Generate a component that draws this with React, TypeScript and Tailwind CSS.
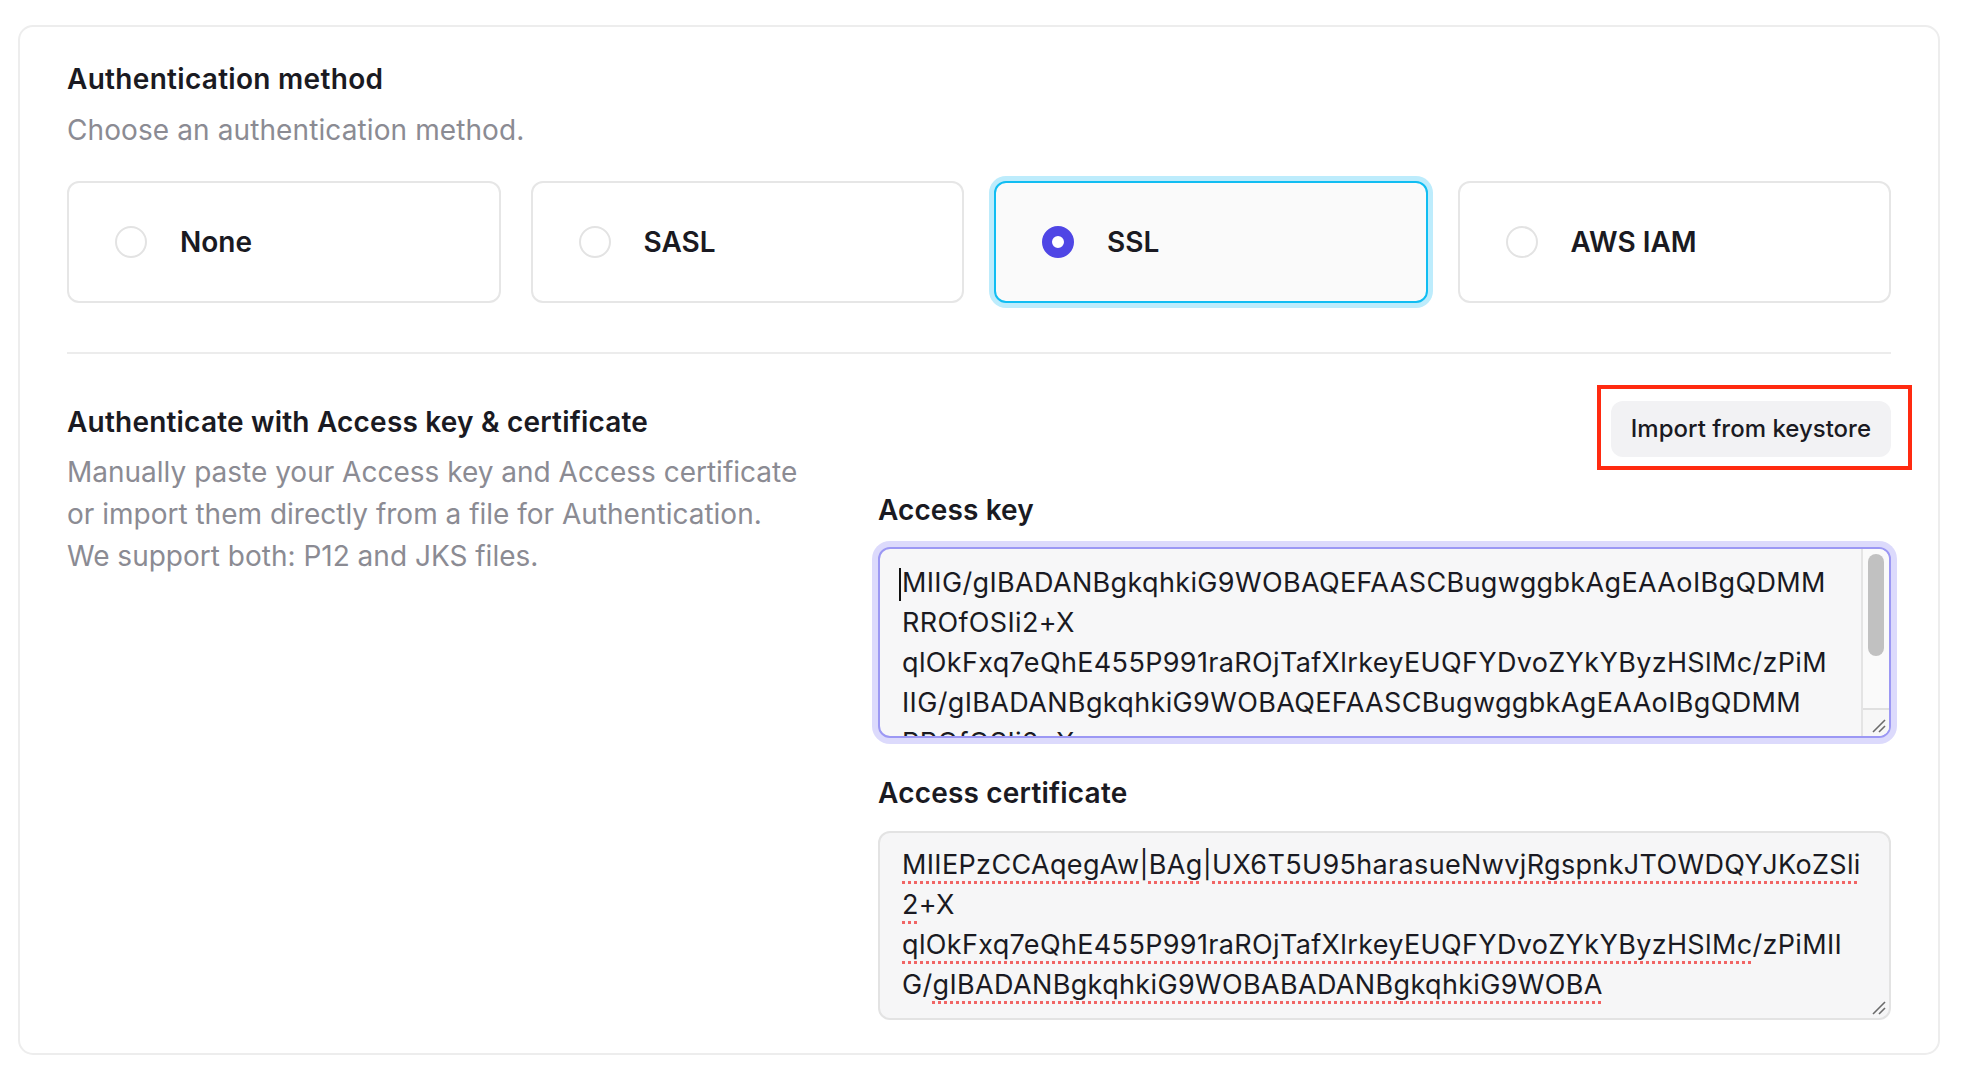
import React from "react";

function Grip() {
  return (
    <svg width="16" height="16" viewBox="0 0 16 16" className="absolute right-[3px] bottom-[3px]">
      <line x1="15" y1="3" x2="3" y2="15" stroke="#6b6b6b" strokeWidth="1.6" />
      <line x1="15" y1="9" x2="9" y2="15" stroke="#6b6b6b" strokeWidth="1.6" />
    </svg>
  );
}

const cards = [
  { label: "None", selected: false },
  { label: "SASL", selected: false },
  { label: "SSL", selected: true },
  { label: "AWS IAM", selected: false },
];

const sp = "underline decoration-dotted decoration-[#f16565] decoration-[3px] underline-offset-[7px]";

export default function App() {
  return (
    <div className="min-h-screen bg-white font-['Inter',sans-serif] text-[#1a1a22] pt-[25px] pl-[18px]">
      <div className="w-[1922px] h-[1030px] rounded-[15px] border-2 border-[#ededed] px-[47px] pt-[34px]">
        <h2 className="text-[28px] leading-[36px] font-semibold tracking-[0.3px]">Authentication method</h2>
        <p className="mt-[15px] text-[28px] leading-[36px] text-[#8b8b93] tracking-[0.1px]">Choose an authentication method.</p>

        <div className="mt-[33px] flex gap-[30px]">
          {cards.map((c) => (
            <div
              key={c.label}
              className={
                c.selected
                  ? "flex-1 h-[122px] rounded-[12px] border-2 border-[#10bdf2] ring-[5px] ring-[#bdecfc] bg-[#fafafa] flex items-center pl-[46px] gap-[33px]"
                  : "flex-1 h-[122px] rounded-[12px] border-2 border-[#e6e6e6] bg-white flex items-center pl-[46px] gap-[33px]"
              }
            >
              {c.selected ? (
                <span className="w-[32px] h-[32px] rounded-full border-[10px] border-[#4f46e5] bg-white" />
              ) : (
                <span className="w-[32px] h-[32px] rounded-full border-2 border-[#e3e3e3] bg-white" />
              )}
              <span className="text-[28px] leading-[36px] font-semibold">{c.label}</span>
            </div>
          ))}
        </div>

        <div className="mt-[49px] h-[2px] bg-[#ececec]" />

        <div className="mt-[47px] flex">
          <div className="w-[811px] pt-[3px]">
            <h3 className="text-[28px] leading-[36px] font-semibold tracking-[0.2px]">Authenticate with Access key &amp; certificate</h3>
            <p className="mt-[11px] text-[28px] leading-[42px] text-[#8b8b93]">
              Manually paste your Access key and Access certificate
              <br />
              or import them directly from a file for Authentication.
              <br />
              We support both: P12 and JKS files.
            </p>
          </div>

          <div className="flex-1">
            <div className="flex justify-end">
              <button className="relative h-[56px] px-[20px] rounded-[12px] bg-[#f2f2f4] text-[24px] font-medium text-[#1a1a22]">
                Import from keystore
                <span className="absolute -left-[14px] -top-[16px] -right-[21px] -bottom-[13px] border-4 border-[#ff2a10] pointer-events-none" />
              </button>
            </div>

            <div className="mt-[35px] text-[28px] leading-[36px] font-semibold tracking-[0.1px]">Access key</div>
            <div className="mt-[19px] relative h-[191px] rounded-[12px] border-2 border-[#9c98f4] ring-[6px] ring-[#dcdafc] bg-[#f7f7f8] overflow-hidden">
              <div className="pl-[22px] pr-[60px] pt-[14px] text-[27px] leading-[40px] tracking-[0.35px] whitespace-nowrap">
                <div>
                  <span className="inline-block w-[2px] h-[33px] bg-[#111] align-middle -ml-[3px] mr-[1px]" />
                  MIIG/gIBADANBgkqhkiG9WOBAQEFAASCBugwggbkAgEAAoIBgQDMM
                </div>
                <div>RROfOSIi2+X</div>
                <div>qlOkFxq7eQhE455P991raROjTafXlrkeyEUQFYDvoZYkYByzHSlMc/zPiM</div>
                <div>IIG/gIBADANBgkqhkiG9WOBAQEFAASCBugwggbkAgEAAoIBgQDMM</div>
                <div>RROfOSIi2+X</div>
              </div>
              <div className="absolute top-0 right-0 bottom-0 w-[28px] bg-[#fafafa] border-l-2 border-[#e4e4e4] flex flex-col">
                <div className="flex-1 relative">
                  <div className="absolute left-[5px] top-[5px] w-[16px] h-[102px] rounded-full bg-[#c1c1c1]" />
                </div>
                <div className="relative h-[28px] border-t-2 border-[#e0e0e0] bg-[#f7f7f7]">
                  <Grip />
                </div>
              </div>
            </div>

            <div className="mt-[37px] text-[28px] leading-[36px] font-semibold tracking-[0.2px]">Access certificate</div>
            <div className="mt-[20px] relative h-[189px] rounded-[12px] border-2 border-[#e3e3e3] bg-[#f6f6f7] overflow-hidden">
              <div className="pl-[22px] pt-[12px] text-[27px] leading-[40px] tracking-[0.35px] whitespace-nowrap">
                <div>
                  <span className={sp}>MIIEPzCCAqegAw</span>|<span className={sp}>BAg</span>|<span className={sp}>UX6T5U95harasueNwvjRgspnkJTOWDQYJKoZSli</span>
                </div>
                <div>
                  <span className={sp}>2</span>+X
                </div>
                <div>
                  <span className={sp}>qlOkFxq7eQhE455P991raROjTafXlrkeyEUQFYDvoZYkYByzHSlMc</span>/zPiMII
                </div>
                <div>
                  G/<span className={sp}>gIBADANBgkqhkiG9WOBABADANBgkqhkiG9WOBA</span>
                </div>
              </div>
              <Grip />
            </div>
          </div>
        </div>
      </div>
    </div>
  );
}
